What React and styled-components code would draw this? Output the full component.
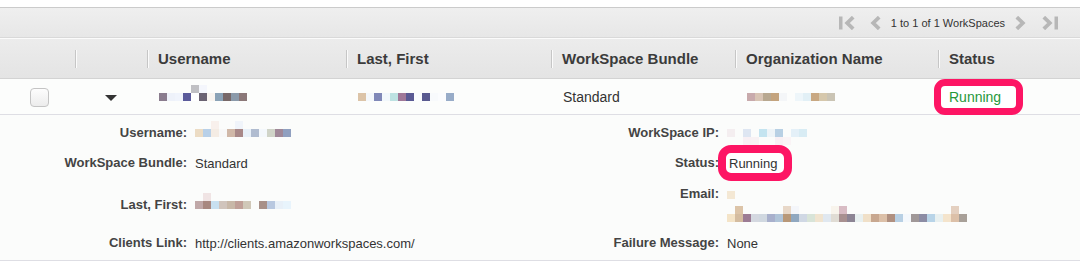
import React from "react";
import styled, { createGlobalStyle } from "styled-components";

const GlobalStyle = createGlobalStyle`
	body {
		margin: 0;
		background: #ffffff;
		font-family: "Liberation Sans", Arial, Helvetica, sans-serif;
	}
`;

const COLS = "75px 72px 199px 205px 184px 203px 1fr";
const PINK = "#fd1564";

// obfuscated (pixelated) values in the screenshot
const PX = {
	rowUser: {
		c: ["#8a7c8e", "#eef2fa", "#f0f4fc", "#5b5b9b", "#ffffff", "#6a6272", "#f8f4f0", "#8aa2b6", "#776868", "#8b9aaa", "#8b7878"],
		up: { 4: "#c0c0c4", 5: "#f4f6fc" },
	},
	rowLast: {
		c: ["#dcc4a8", "#f4f8fc", "#8088b8", "#f2f8fc", "#bde2e2", "#a07898", "#5a5a94", "#fafcfe", "#5a5a90", "#f8fafc", "#fbfcfe", "#98acc8"],
		up: {},
	},
	rowOrg: {
		c: ["#c8aaac", "#d8c4b4", "#b8a890", "#c4a47e", "#f4f6f8", "transparent", "#eef6fa", "#e2f0f6", "#c8a882", "#d6c8ac", "#cac4b4"],
		up: {},
	},
	detUser: {
		c: ["#ecdcc4", "#b8d0e8", "#f4ece4", "#f8f8f8", "#d0b8a8", "#a88888", "#e8f0f8", "#b0bcd0", "#f4f8fc", "#d0d4c8", "#a08898", "#90a0c0"],
		up: { 2: "#f8f0ec", 5: "#f0f4fa" },
	},
	detLast: {
		c: ["#c0a8a8", "#a88880", "#c8e0f0", "#d0c4bc", "#c8b8a8", "#c0a098", "#d0c8b8", "transparent", "#a89088", "#b8c8e0", "#e8f0f8", "#e8f4fc"],
		up: { 1: "#f0e4e4" },
	},
	ip: {
		c: ["#f4eef0", "transparent", "#dee6f2", "transparent", "#c4e4f0", "#eef4f8", "#b8d0e4", "transparent", "#e4f0f8", "#d8ecf4"],
		up: {},
		down: { 2: "#f8f0f4", 3: "#f8f2f4", 6: "#f8f0f4", 7: "#faf4f6" },
	},
	mail1: { c: ["#f4e8d4"], up: {} },
	mail2: {
		c: ["#f4e4c8", "#d4bca0", "#9c7c94", "#d4d8e0", "#d0d8e0", "#a8b0cc", "#b0c4d8", "#b89878", "#90a8c0", "#d0d8e4", "#d8e4d8", "#f0e4d0", "#e0e8f0", "#e0dcd4", "#a89090", "#8c8494", "#e8f0f0", "#f0e0c8", "#c8a890", "#dcc0a8", "#b09080", "#b8d0e4", "#f4f8fc", "#a09898", "#8c8ca4", "#b8d4e8", "#e8f0f0", "#f4e4cc", "#dcc0a8", "#a8a098"],
		up: { 1: "#dcc4a8", 7: "#e8d8c8", 8: "#f4f6fa", 13: "#f8f4ec", 14: "#d8bcc4", 28: "#e4d0c0" },
	},
};

function Pixels({ data }) {
	return (
		<PixelRow>
			{data.c.map((c, i) => (
				<Pixel key={i} $c={c} $up={data.up[i]} $down={data.down && data.down[i]} />
			))}
		</PixelRow>
	);
}

function PagerIcon({ dir, bar, ml = 0, mr = 0 }) {
	const w = bar ? 16 : 11;
	const flip = dir === "right";
	return (
		<PagerSvg width={w} height="14" viewBox={`0 0 ${w} 14`} $ml={ml} $mr={mr}>
			<g transform={flip ? `translate(${w} 0) scale(-1 1)` : undefined}>
				{bar && <rect x="0" y="0.5" width="3.5" height="13" fill="#b7b7b7" />}
				<polyline
					points={bar ? "14.2,1.2 8.2,7 14.2,12.8" : "9.2,1.2 3.2,7 9.2,12.8"}
					fill="none"
					stroke="#b7b7b7"
					strokeWidth="3.8"
				/>
			</g>
		</PagerSvg>
	);
}

export default function App() {
	return (
		<>
			<GlobalStyle />
			<Page>
				<Toolbar>
					<Pager>
						<PagerIcon dir="left" bar mr={5} />
						<PagerIcon dir="left" />
						<PagerText>1 to 1 of 1 WorkSpaces</PagerText>
						<PagerIcon dir="right" />
						<PagerIcon dir="right" bar ml={6} />
					</Pager>
				</Toolbar>

				<HeaderRow>
					<HeaderCell />
					<HeaderCell>
						<Sep />
					</HeaderCell>
					<HeaderCell>
						<Sep />
						Username
					</HeaderCell>
					<HeaderCell>
						<Sep />
						Last, First
					</HeaderCell>
					<HeaderCell>
						<Sep />
						WorkSpace Bundle
					</HeaderCell>
					<HeaderCell>
						<Sep />
						Organization Name
					</HeaderCell>
					<HeaderCell>
						<Sep />
						Status
					</HeaderCell>
				</HeaderRow>

				<DataRow>
					<Cell $center>
						<Checkbox />
					</Cell>
					<Cell $center>
						<Caret />
					</Cell>
					<Cell>
						<Pixels data={PX.rowUser} />
					</Cell>
					<Cell>
						<Pixels data={PX.rowLast} />
					</Cell>
					<Cell>Standard</Cell>
					<Cell>
						<Pixels data={PX.rowOrg} />
					</Cell>
					<Cell>
						<Highlight $bw={7} $r={11} $pad="0 15px 0 8px" $ml={-16} $color="#26983a">
							Running
						</Highlight>
					</Cell>
				</DataRow>

				<Detail>
					<Label>Username:</Label>
					<Value>
						<Pixels data={PX.detUser} />
					</Value>
					<Label>WorkSpace IP:</Label>
					<Value>
						<Pixels data={PX.ip} />
					</Value>

					<Label>WorkSpace Bundle:</Label>
					<Value>Standard</Value>
					<Label>Status:</Label>
					<Value>
						<Highlight $bw={8} $r={13} $pad="0 7px 0 3px" $ml={-9} $color="#333">
							Running
						</Highlight>
					</Value>

					<Label>Last, First:</Label>
					<Value>
						<Pixels data={PX.detLast} />
					</Value>
					<Label $top>Email:</Label>
					<EmailValue>
						<Pixels data={PX.mail1} />
						<Pixels data={PX.mail2} />
					</EmailValue>

					<Label>Clients Link:</Label>
					<Value>http://clients.amazonworkspaces.com/</Value>
					<Label>Failure Message:</Label>
					<Value>None</Value>
				</Detail>
			</Page>
		</>
	);
}

const Page = styled.div`
	width: 1080px;
	padding-top: 7px;
`;

const Toolbar = styled.div`
	height: 29px;
	display: flex;
	justify-content: flex-end;
	align-items: center;
	padding-right: 22px;
	border-top: 1px solid #cbcbcb;
	border-bottom: 1px solid #d9d9d9;
	background: linear-gradient(#efefef, #e7e7e7);
`;

const Pager = styled.div`
	display: flex;
	align-items: center;
	gap: 10px;
`;

const PagerSvg = styled.svg`
	display: block;
	margin-left: ${(props) => props.$ml}px;
	margin-right: ${(props) => props.$mr}px;
`;

const PagerText = styled.span`
	font-size: 11px;
	color: #333;
	line-height: 14px;
`;

const HeaderRow = styled.div`
	display: grid;
	grid-template-columns: ${COLS};
	height: 39px;
	border-top: 1px solid #fbfbfb;
	border-bottom: 1px solid #d3d3d3;
	background: linear-gradient(#ececec, #e4e4e4);
`;

const HeaderCell = styled.div`
	display: flex;
	align-items: center;
	gap: 9px;
	font-size: 15px;
	font-weight: bold;
	color: #3b3b3b;
	white-space: nowrap;
`;

const Sep = styled.span`
	width: 1px;
	height: 18px;
	background: #c6c6c6;
	border-right: 1px solid #fbfbfb;
`;

const DataRow = styled.div`
	display: grid;
	grid-template-columns: ${COLS};
	height: 35px;
	border-bottom: 1px solid #dedee4;
	background: #fcfdfc;
	font-size: 14px;
	color: #333;
`;

const Cell = styled.div`
	display: flex;
	align-items: center;
	justify-content: ${(props) => (props.$center ? "center" : "flex-start")};
	padding-left: ${(props) => (props.$center ? "0" : "12px")};
	white-space: nowrap;
`;

const Checkbox = styled.span`
	width: 17px;
	height: 17px;
	margin-left: 4px;
	border: 1px solid #c4c4c4;
	border-radius: 4px;
	background: linear-gradient(#fdfdfd, #ececec);
`;

const Caret = styled.span`
	width: 0;
	height: 0;
	border-left: 6px solid transparent;
	border-right: 6px solid transparent;
	border-top: 6px solid #333;
	margin-top: 1px;
`;

const Highlight = styled.span`
	display: inline-flex;
	align-items: center;
	box-sizing: border-box;
	height: 36px;
	border: ${(props) => props.$bw}px solid ${PINK};
	border-radius: ${(props) => props.$r}px;
	background: #ffffff;
	padding: ${(props) => props.$pad};
	margin-left: ${(props) => props.$ml}px;
	color: ${(props) => props.$color};
`;

const Detail = styled.div`
	display: grid;
	grid-template-columns: 187px 300px 216px 1fr;
	grid-template-rows: 30px 30px 54px 22px;
	column-gap: 8px;
	padding: 3px 0 6px;
	border-bottom: 1px solid #dedee4;
	background: #fbfcfb;
	font-size: 13px;
	color: #333;
`;

const Label = styled.div`
	align-self: ${(props) => (props.$top ? "start" : "center")};
	margin-top: ${(props) => (props.$top ? "5px" : "0")};
	line-height: 22px;
	text-align: right;
	font-weight: bold;
	color: #444;
	white-space: nowrap;
`;

const Value = styled.div`
	align-self: center;
	display: flex;
	align-items: center;
	white-space: nowrap;
`;

const EmailValue = styled.div`
	align-self: center;
	display: flex;
	flex-direction: column;
	gap: 15px;
	padding-top: 2px;
`;

const PixelRow = styled.span`
	display: inline-flex;
`;

const Pixel = styled.span`
	width: 8px;
	height: 8px;
	background: ${(props) => props.$c};
	box-shadow: ${(props) =>
		[props.$up && `0 -8px 0 ${props.$up}`, props.$down && `0 8px 0 ${props.$down}`]
			.filter(Boolean)
			.join(", ") || "none"};
`;
